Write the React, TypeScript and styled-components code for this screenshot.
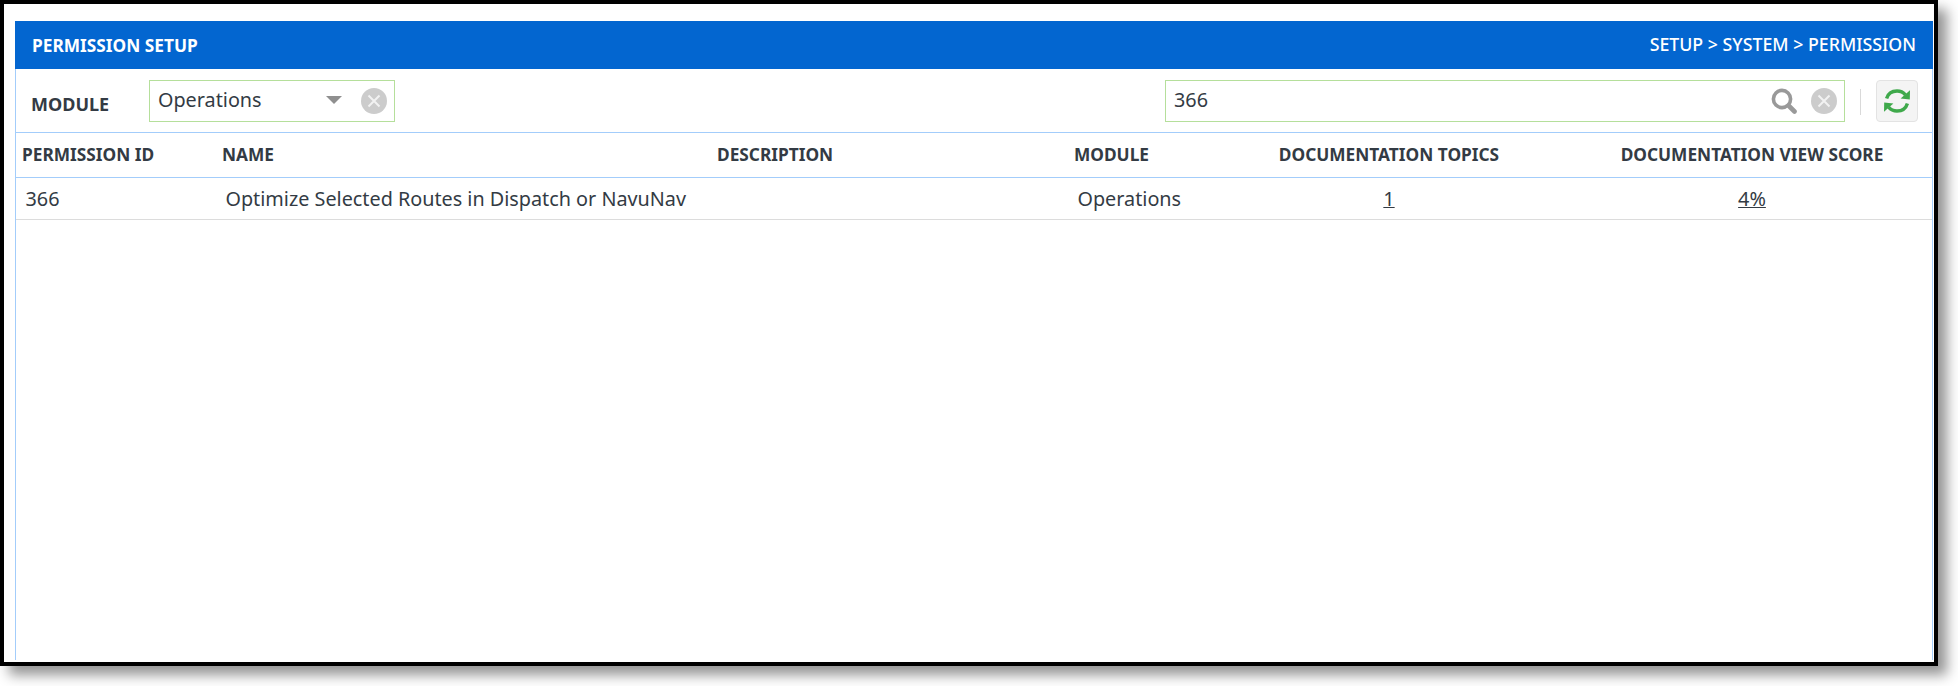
import React from 'react';
import styled, { createGlobalStyle } from 'styled-components';

const Global = createGlobalStyle`
  html, body { margin: 0; padding: 0; background: #fff; }
  body { width: 1958px; height: 686px; overflow: hidden; font-family: "Noto Sans", "Open Sans", sans-serif; color: #333b44; }
`;

const Frame = styled.div`
  box-sizing: border-box;
  width: 1938px;
  height: 666px;
  border: 4px solid #000;
  background: #fff;
  box-shadow: 9px 9px 12px rgba(0, 0, 0, 0.42);
  padding: 17px 1px 2px 11px;
  display: flex;
`;

const Panel = styled.div`
  flex: 1;
  display: flex;
  flex-direction: column;
  border-left: 1px solid #a3cdfb;
  border-right: 1px solid #a3cdfb;
  min-width: 0;
`;

const TitleBar = styled.header`
  height: 48px;
  margin: 0 -1px;
  padding: 0 17px;
  background: #0366d0;
  color: #fff;
  display: flex;
  align-items: center;
  justify-content: space-between;
`;

const Title = styled.h1`
  margin: 0;
  font-size: 17.3px;
  font-weight: 700;
`;

const Crumb = styled.div`
  font-size: 17.75px;
  font-weight: 500;
  padding-bottom: 3px;
`;

const Toolbar = styled.div`
  height: 64px;
  box-sizing: border-box;
  border-bottom: 1px solid #a3cdfb;
  display: flex;
  align-items: flex-start;
  padding: 11px 14px 0 15px;
`;

const Label = styled.label`
  width: 118px;
  padding: 13px 0 0;
  font-size: 18px;
  font-weight: 700;
  line-height: 22px;
  box-sizing: border-box;
`;

const Field = styled.div<{ $w: number }>`
  width: ${p => p.$w}px;
  height: 42px;
  box-sizing: border-box;
  border: 1px solid #b5df9b;
  display: flex;
  align-items: center;
  padding: 0 7px 0 8px;
  font-size: 19.8px;
`;

const FieldText = styled.span`
  flex: 1;
  padding-bottom: 4px;
`;

const Caret = styled.span`
  width: 0;
  height: 0;
  border-left: 8px solid transparent;
  border-right: 8px solid transparent;
  border-top: 8px solid #8f8f8f;
  margin: 0 19px 2px 0;
`;

const Spacer = styled.div`
  flex: 1;
`;

const Divider = styled.div`
  width: 1px;
  height: 26px;
  margin: 9px 15px 0 15px;
  background: #d9d9d9;
`;

const RefreshButton = styled.button`
  width: 42px;
  height: 42px;
  padding: 0;
  background: #f4f4f4;
  border: 1px solid #e3e3e3;
  border-radius: 4px;
  display: flex;
  align-items: center;
  justify-content: center;
`;

const columns = '200px 495px 357px 138px 366px 1fr';

const HeadRow = styled.div`
  display: grid;
  grid-template-columns: ${columns};
  height: 45px;
  box-sizing: border-box;
  border-bottom: 1px solid #a3cdfb;
  align-items: center;
`;

const BodyRow = styled.div`
  display: grid;
  grid-template-columns: ${columns};
  height: 42px;
  box-sizing: border-box;
  border-bottom: 1px solid #dcdcdc;
  align-items: center;
`;

const Head = styled.div<{ $center?: boolean }>`
  padding: 0 0 2px ${p => (p.$center ? 0 : 6)}px;
  text-align: ${p => (p.$center ? 'center' : 'left')};
  font-size: 17.3px;
  font-weight: 700;
  white-space: nowrap;
`;

const Cell = styled.div<{ $center?: boolean }>`
  padding-left: ${p => (p.$center ? 0 : 9.5)}px;
  text-align: ${p => (p.$center ? 'center' : 'left')};
  font-size: 19.8px;
  white-space: nowrap;
`;

const LinkText = styled.a`
  color: inherit;
  text-decoration: underline;
`;

const ClearIcon = () => (
  <svg width="26" height="26" viewBox="0 0 26 26" style={{ flex: 'none' }}>
    <circle cx="13" cy="13" r="13" fill="#cccccc" />
    <path d="M7.5 7.5 18.5 18.5M18.5 7.5 7.5 18.5" stroke="#f2f2f2" strokeWidth="2" />
  </svg>
);

const SearchIcon = () => (
  <svg width="26" height="26" viewBox="0 0 26 26" style={{ flex: 'none', marginRight: 14 }}>
    <circle cx="11" cy="11" r="8.6" fill="none" stroke="#999" strokeWidth="3.6" />
    <path d="M18 18 23.5 23.5" stroke="#999" strokeWidth="4.6" strokeLinecap="round" />
  </svg>
);

const RefreshIcon = () => (
  <svg width="28" height="26" viewBox="0 0 28 26">
    <path d="M3.6 10.5C5 5.8 9 3 14 3c3.4 0 6.4 1.4 8.4 3.8" fill="none" stroke="#3fa94b" strokeWidth="3.4" />
    <path d="M27 2.2 26.8 11.6 17.6 10.4Z" fill="#3fa94b" />
    <path d="M24.4 15.5C23 20.2 19 23 14 23c-3.4 0-6.4-1.4-8.4-3.8" fill="none" stroke="#3fa94b" strokeWidth="3.4" />
    <path d="M1 23.8 1.2 14.4 10.4 15.6Z" fill="#3fa94b" />
  </svg>
);

export default function App() {
  return (
    <>
      <Global />
      <Frame>
        <Panel>
          <TitleBar>
            <Title>PERMISSION SETUP</Title>
            <Crumb>SETUP &gt; SYSTEM &gt; PERMISSION</Crumb>
          </TitleBar>
          <Toolbar>
            <Label>MODULE</Label>
            <Field $w={246}>
              <FieldText>Operations</FieldText>
              <Caret />
              <ClearIcon />
            </Field>
            <Spacer />
            <Field $w={680}>
              <FieldText>366</FieldText>
              <SearchIcon />
              <ClearIcon />
            </Field>
            <Divider />
            <RefreshButton aria-label="Refresh"><RefreshIcon /></RefreshButton>
          </Toolbar>
          <HeadRow>
            <Head>PERMISSION ID</Head>
            <Head>NAME</Head>
            <Head>DESCRIPTION</Head>
            <Head>MODULE</Head>
            <Head $center>DOCUMENTATION TOPICS</Head>
            <Head $center>DOCUMENTATION VIEW SCORE</Head>
          </HeadRow>
          <BodyRow>
            <Cell>366</Cell>
            <Cell>Optimize Selected Routes in Dispatch or NavuNav</Cell>
            <Cell />
            <Cell>Operations</Cell>
            <Cell $center><LinkText>1</LinkText></Cell>
            <Cell $center><LinkText>4%</LinkText></Cell>
          </BodyRow>
        </Panel>
      </Frame>
    </>
  );
}
